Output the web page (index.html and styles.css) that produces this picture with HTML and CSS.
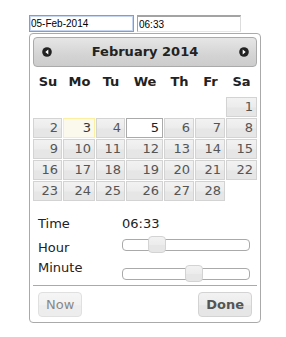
FILE: index.html
```html
<!DOCTYPE html>
<html lang="en">
<head>
    <meta charset="UTF-8">
    <meta name="viewport" content="width=device-width, initial-scale=1.0">
    <title>Datetime Picker</title>
    <link rel="stylesheet" href="styles.css">
</head>
<body>
    <div class="demo">
        <div class="fields">
            <input class="field field-focus" type="text" value="05-Feb-2014">
            <input class="field field-time" type="text" value="06:33">
        </div>

        <div class="datepicker">
            <div class="dp-header">
                <a class="dp-nav">
                    <svg width="10" height="10" viewBox="0 0 10 10"><circle cx="5" cy="5" r="4.8" fill="#222"/><path d="M6.3 2.6v4.8L3.3 5z" fill="#fff"/></svg>
                </a>
                <div class="dp-title">February 2014</div>
                <a class="dp-nav">
                    <svg width="10" height="10" viewBox="0 0 10 10"><circle cx="5" cy="5" r="4.8" fill="#222"/><path d="M3.7 2.6v4.8L6.7 5z" fill="#fff"/></svg>
                </a>
            </div>

            <table class="dp-calendar">
                <thead>
                    <tr><th>Su</th><th>Mo</th><th>Tu</th><th>We</th><th>Th</th><th>Fr</th><th>Sa</th></tr>
                </thead>
                <tbody>
                    <tr><td></td><td></td><td></td><td></td><td></td><td></td><td><a class="day">1</a></td></tr>
                    <tr><td><a class="day">2</a></td><td><a class="day today">3</a></td><td><a class="day">4</a></td><td><a class="day selected">5</a></td><td><a class="day">6</a></td><td><a class="day">7</a></td><td><a class="day">8</a></td></tr>
                    <tr><td><a class="day">9</a></td><td><a class="day">10</a></td><td><a class="day">11</a></td><td><a class="day">12</a></td><td><a class="day">13</a></td><td><a class="day">14</a></td><td><a class="day">15</a></td></tr>
                    <tr><td><a class="day">16</a></td><td><a class="day">17</a></td><td><a class="day">18</a></td><td><a class="day">19</a></td><td><a class="day">20</a></td><td><a class="day">21</a></td><td><a class="day">22</a></td></tr>
                    <tr><td><a class="day">23</a></td><td><a class="day">24</a></td><td><a class="day">25</a></td><td><a class="day">26</a></td><td><a class="day">27</a></td><td><a class="day">28</a></td><td></td></tr>
                </tbody>
            </table>

            <div class="timepicker">
                <div class="tp-label">Time</div>
                <div class="tp-value">06:33</div>
                <div class="tp-label tp-hour">Hour</div>
                <div class="slider slider-hour"><span class="handle" style="left: 26.09%"></span></div>
                <div class="tp-label tp-minute">Minute</div>
                <div class="slider slider-minute"><span class="handle" style="left: 55.93%"></span></div>
            </div>

            <div class="buttonpane">
                <button class="btn btn-secondary">Now</button>
                <button class="btn btn-primary">Done</button>
            </div>
        </div>
    </div>
</body>
</html>
```

FILE: styles.css
```css
body {
    margin: 0;
    background: #fff;
    font-family: "DejaVu Sans", Verdana, sans-serif;
}

.demo {
    padding: 15px 0 0 29px;
    width: 232px;
}

.fields {
    display: flex;
    gap: 3px;
}

.field {
    box-sizing: border-box;
    height: 17px;
    margin: 0;
    padding: 0 1px;
    font: 10px "Liberation Sans", Arial, sans-serif;
    color: #000;
    background: #fff;
    outline: none;
}

.field-focus {
    width: 105px;
    border: 1px solid #7b9ed6;
    box-shadow: inset 0 0 0 1px #c6d6f0;
}

.field-time {
    width: 104px;
    border-style: solid;
    border-width: 2px 1px 1px 1px;
    border-color: #a3a3a3 #dcdcdc #e6e6e6 #a3a3a3;
}

.datepicker {
    box-sizing: border-box;
    width: 232px;
    margin-top: 1px;
    padding: 3px 3px 0;
    border: 1px solid #aaa;
    border-radius: 4px;
    background: #fff;
    color: #222;
}

/* month header */
.dp-header {
    display: flex;
    align-items: center;
    height: 28px;
    border: 1px solid #aaa;
    border-radius: 4px;
    background: linear-gradient(#e6e6e6, #d4d4d4 60%, #cccccc);
    color: #222;
}

.dp-nav {
    width: 25px;
    height: 28px;
    display: flex;
    align-items: center;
    justify-content: center;
}

.dp-title {
    flex: 1;
    text-align: center;
    font-size: 13px;
    font-weight: bold;
    line-height: 28px;
}

/* days grid */
.dp-calendar {
    width: 224px;
    table-layout: fixed;
    border-collapse: separate;
    border-spacing: 0;
    font-size: 13px;
}

.dp-calendar th {
    padding: 7px 0;
    line-height: 16px;
    font-weight: bold;
    text-align: center;
    color: #222;
}

.dp-calendar th:nth-child(1) { width: 30px; }
.dp-calendar th:nth-child(2) { width: 33px; }
.dp-calendar th:nth-child(3) { width: 30px; }
.dp-calendar th:nth-child(4) { width: 38px; }
.dp-calendar th:nth-child(5) { width: 31px; }
.dp-calendar th:nth-child(6) { width: 31px; }
.dp-calendar th:nth-child(7) { width: 31px; }

.dp-calendar td {
    padding: 0 1px 1px 0;
}

.dp-calendar td:last-child {
    padding-right: 0;
}

.day {
    display: block;
    height: 18px;
    padding: 0 3px;
    line-height: 18px;
    text-align: right;
    border: 1px solid #d3d3d3;
    background: linear-gradient(#f2f2f2, #ececec 50%, #e6e6e6 55%, #e6e6e6);
    color: #555;
}

.day.today {
    border-color: #fcefa1;
    background: #fbf9ee;
    color: #363636;
}

.day.selected {
    border-color: #aaa;
    background: #fff;
    color: #212121;
}

/* time */
.timepicker {
    display: grid;
    grid-template-columns: 89px 128px;
    grid-template-rows: 20px 24px 24px;
    margin-top: 12px;
    font-size: 13px;
    color: #222;
}

.tp-label {
    padding-left: 5px;
    line-height: 20px;
}

.tp-value {
    line-height: 20px;
}

.tp-hour {
    align-self: end;
}

.slider {
    position: relative;
    height: 10px;
    border: 1px solid #aaa;
    border-radius: 4px;
    background: #fff;
}

.slider-hour {
    margin-top: 5px;
}

.slider-minute {
    margin-top: 10px;
}

.handle {
    position: absolute;
    top: -4px;
    width: 16px;
    height: 15px;
    margin-left: -8px;
    border: 1px solid #d3d3d3;
    border-radius: 4px;
    background: linear-gradient(#f2f2f2, #ececec 50%, #e6e6e6 55%, #e6e6e6);
}

/* buttons */
.buttonpane {
    display: flex;
    justify-content: space-between;
    margin-top: 3px;
    padding: 6px 5px 5px;
    border-top: 1px solid #aaa;
}

.btn {
    height: 25px;
    margin: 0;
    padding: 0 7px;
    border: 1px solid #d3d3d3;
    border-radius: 4px;
    background: linear-gradient(#f2f2f2, #ececec 50%, #e6e6e6 55%, #e6e6e6);
    color: #555;
    font-family: "DejaVu Sans", Verdana, sans-serif;
    font-size: 13px;
}

.btn-secondary {
    font-weight: normal;
    opacity: 0.7;
}

.btn-primary {
    font-weight: bold;
}
```
